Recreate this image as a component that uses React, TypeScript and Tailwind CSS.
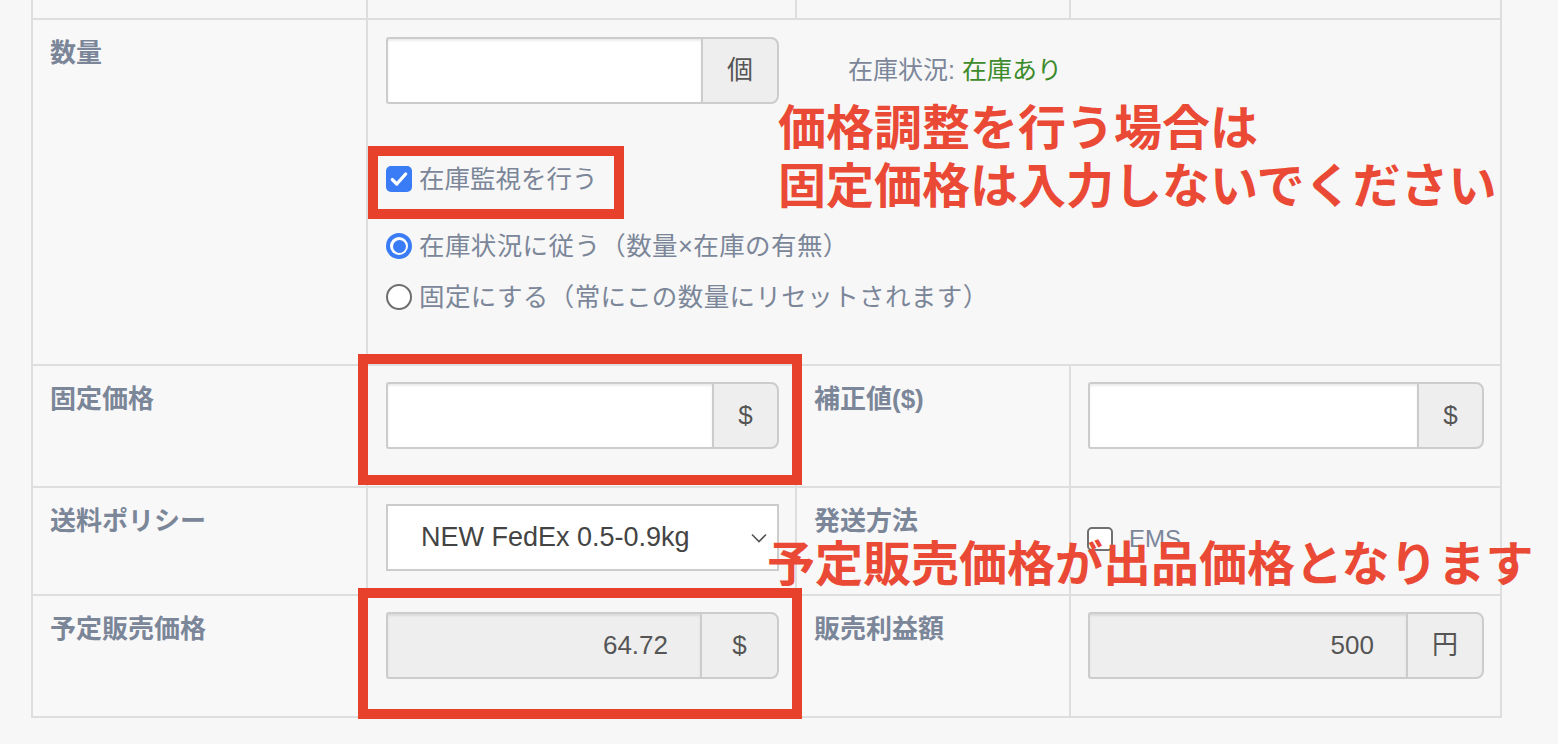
import { FC, ReactNode } from "react";

const font = { fontFamily: '"Liberation Sans", "Noto Sans CJK JP", sans-serif' };

const labelCls = "bg-[#f8f8f8] pl-[17px] pt-[15px] text-[26px] leading-[36px] font-bold text-[#7b8699]";
const cellCls = "bg-[#f7f7f7]";

type GroupProps = { addon: ReactNode; addonW: string; value?: string; readOnly?: boolean; width: string };

const InputGroup: FC<GroupProps> = ({ addon, addonW, value, readOnly, width }) => (
	<div className={`flex h-[67px] ${width}`}>
		<div
			className={`flex-1 flex items-center justify-end pr-[32px] border-2 border-r-0 border-[#cccccc] rounded-l-[3px] shadow-[inset_0_2px_2px_rgba(0,0,0,0.08)] text-[26px] text-[#555555] ${
				readOnly ? "bg-[#eeeeee]" : "bg-white"
			}`}
		>
			{value}
		</div>
		<div className={`${addonW} flex items-center justify-center border-2 border-[#cccccc] bg-[#eeeeee] rounded-r-[8px] text-[26px] text-[#555555]`}>
			{addon}
		</div>
	</div>
);

const Radio: FC<{ checked?: boolean }> = ({ checked }) =>
	checked ? (
		<span className="shrink-0 w-[26px] h-[26px] rounded-full bg-[#3a7cf5] flex items-center justify-center">
			<span className="w-[18px] h-[18px] rounded-full bg-white flex items-center justify-center">
				<span className="w-[13px] h-[13px] rounded-full bg-[#3a7cf5]" />
			</span>
		</span>
	) : (
		<span className="shrink-0 w-[26px] h-[26px] rounded-full border-2 border-[#6e6e6e] bg-white" />
	);

const App: FC = () => {
	return (
		<div className="relative w-[1558px] h-[744px] bg-[#f7f7f7] overflow-hidden" style={font}>
			<div className="ml-[31px] w-[1471px] grid grid-cols-[333px_427px_272px_429px] grid-rows-[18px_344px_120px_106px_120px] gap-[2px] bg-[#dedede] px-[2px] pb-[2px]">
				{/* partial row above */}
				<div className={labelCls} />
				<div className={cellCls} />
				<div className={cellCls} />
				<div className={cellCls} />

				{/* 数量 */}
				<div className={labelCls}>数量</div>
				<div className={`${cellCls} col-span-3 pl-[18px] pt-[17px] flex flex-col`}>
					<div className="flex items-center gap-[69px]">
						<InputGroup width="w-[393px]" addon="個" addonW="w-[78px]" />
						<div className="text-[25px] text-[#7b8699]">
							在庫状況: <span className="text-[#3d8b2a]">在庫あり</span>
						</div>
					</div>
					<label className="mt-[57px] flex items-center gap-[7px] h-[36px] text-[25.5px] text-[#7b8699]">
						<span className="shrink-0 w-[26px] h-[26px] rounded-[5px] bg-[#3a7cf5] flex items-center justify-center">
							<svg width="20" height="20" viewBox="0 0 18 18" fill="none">
								<path d="M3 9.5l4 4 8-9" stroke="white" strokeWidth="3" strokeLinecap="round" strokeLinejoin="round" />
							</svg>
						</span>
						在庫監視を行う
					</label>
					<label className="mt-[31px] flex items-center gap-[7px] h-[36px] text-[25.5px] tracking-[0.4px] text-[#7b8699]">
						<Radio checked />
						在庫状況に従う（数量×在庫の有無）
					</label>
					<label className="mt-[15px] flex items-center gap-[7px] h-[36px] text-[25.5px] tracking-[0.4px] text-[#7b8699]">
						<Radio />
						固定にする（常にこの数量にリセットされます）
					</label>
				</div>

				{/* 固定価格 / 補正値 */}
				<div className={labelCls}>固定価格</div>
				<div className={`${cellCls} pl-[18px] pt-[16px]`}>
					<InputGroup width="w-[393px]" addon="$" addonW="w-[67px]" />
				</div>
				<div className={labelCls}>補正値($)</div>
				<div className={`${cellCls} pl-[17px] pt-[16px]`}>
					<InputGroup width="w-[396px]" addon="$" addonW="w-[67px]" />
				</div>

				{/* 送料ポリシー / 発送方法 */}
				<div className={labelCls}>送料ポリシー</div>
				<div className={`${cellCls} pl-[18px] pt-[16px]`}>
					<div className="w-[393px] h-[67px] bg-white border-2 border-[#cccccc] flex items-center pl-[33px] pr-[10px] text-[27px] text-[#444444]">
						<span className="flex-1">NEW FedEx 0.5-0.9kg</span>
						<svg width="16" height="10" viewBox="0 0 16 10" fill="none">
							<path d="M1 1.5l7 7 7-7" stroke="#555555" strokeWidth="1.6" />
						</svg>
					</div>
				</div>
				<div className={labelCls}>発送方法</div>
				<div className={`${cellCls} pl-[16px] pt-[33px]`}>
					<label className="flex items-center gap-[16px] text-[24px] text-[#7b8699]">
						<span className="shrink-0 w-[26px] h-[24px] rounded-[5px] border-2 border-[#707070] bg-white" />
						EMS
					</label>
				</div>

				{/* 予定販売価格 / 販売利益額 */}
				<div className={labelCls}>予定販売価格</div>
				<div className={`${cellCls} pl-[18px] pt-[16px]`}>
					<InputGroup width="w-[393px]" addon="$" addonW="w-[79px]" value="64.72" readOnly />
				</div>
				<div className={labelCls}>販売利益額</div>
				<div className={`${cellCls} pl-[17px] pt-[16px]`}>
					<InputGroup width="w-[396px]" addon="円" addonW="w-[78px]" value="500" readOnly />
				</div>
			</div>

			{/* annotations */}
			<div className="absolute left-[368px] top-[146px] w-[256px] h-[73px] border-[10px] border-[#e8412b]" />
			<div className="absolute left-[358px] top-[354px] w-[444px] h-[131px] border-[10px] border-[#e8412b]" />
			<div className="absolute left-[358px] top-[588px] w-[444px] h-[131px] border-[10px] border-[#e8412b]" />

			<div className="absolute left-[778px] top-[100px] text-[48px] leading-[58px] font-bold text-[#ea4a35]">
				価格調整を行う場合は
				<br />
				固定価格は入力しないでください
			</div>
			<div className="absolute left-[767px] top-[536px] text-[48px] leading-[58px] font-bold text-[#ea4a35]">
				予定販売価格が出品価格となります
			</div>
		</div>
	);
};

export default App;
